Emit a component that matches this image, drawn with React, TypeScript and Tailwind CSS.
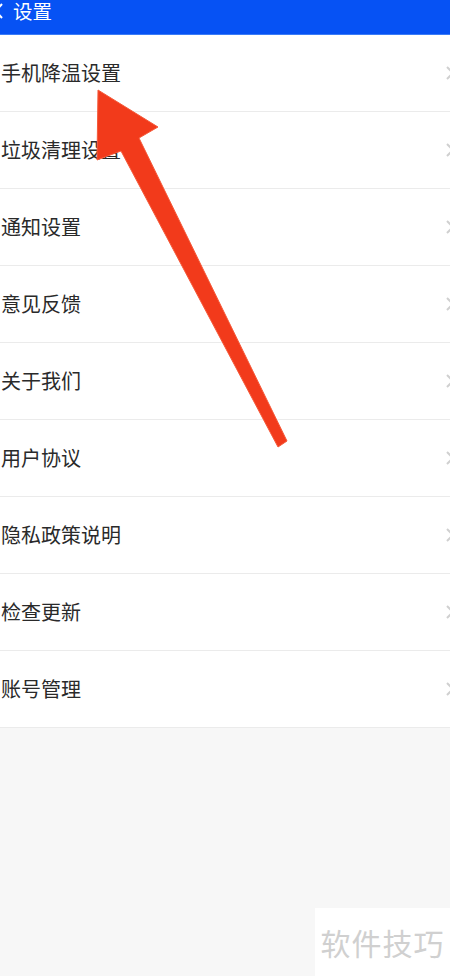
import React from "react";

const items = [
  "手机降温设置",
  "垃圾清理设置",
  "通知设置",
  "意见反馈",
  "关于我们",
  "用户协议",
  "隐私政策说明",
  "检查更新",
  "账号管理",
];

const font = { fontFamily: '"Noto Sans CJK SC", "Noto Sans", sans-serif' };

function Chevron() {
  return (
    <svg width="10" height="16" viewBox="0 0 10 16" className="shrink-0">
      <path d="M2 2 L8 8 L2 14" fill="none" stroke="#d0d0d0" strokeWidth="2" />
    </svg>
  );
}

export default function App() {
  return (
    <div className="relative w-[450px] h-[976px] bg-[#f7f7f7] overflow-hidden" style={font}>
      <div className="h-[35px] bg-[#0652f4] flex items-start border-b border-[#3b7cf6]">
        <div className="flex items-center h-[21px] mt-0">
          <svg width="10" height="18" viewBox="0 0 10 18" className="-ml-[6px]">
            <path d="M8 2 L2 9 L8 16" fill="none" stroke="#ffffff" strokeWidth="2" />
          </svg>
          <span className="ml-[9px] text-[19.5px] leading-[21px] text-white">设置</span>
        </div>
      </div>
      <div className="bg-white">
        {items.map((t, i) => (
          <div
            key={i}
            className={`h-[77px] flex items-center justify-between pl-[1px] pr-0 border-b border-[#ebebeb] ${i === 0 ? "h-[76px]" : ""}`}
          >
            <span className="text-[20px] text-[#2a2a2a] leading-none">{t}</span>
            <div className="mr-[-5px]">
              <Chevron />
            </div>
          </div>
        ))}
      </div>
      <svg className="absolute left-0 top-0 pointer-events-none" width="450" height="976">
        <polygon
          points="98,90 158,127 139,138 287,441 278,447 121,151 97,160"
          fill="#f23a1b"
          stroke="#f55a3a"
          strokeWidth="1"
          strokeLinejoin="round"
        />
      </svg>
      <div className="absolute right-0 bottom-0 w-[135px] h-[68px] bg-white flex items-center justify-center">
        <span className="text-[30px] text-[#d0d0d0] tracking-[1px]">软件技巧</span>
      </div>
    </div>
  );
}
